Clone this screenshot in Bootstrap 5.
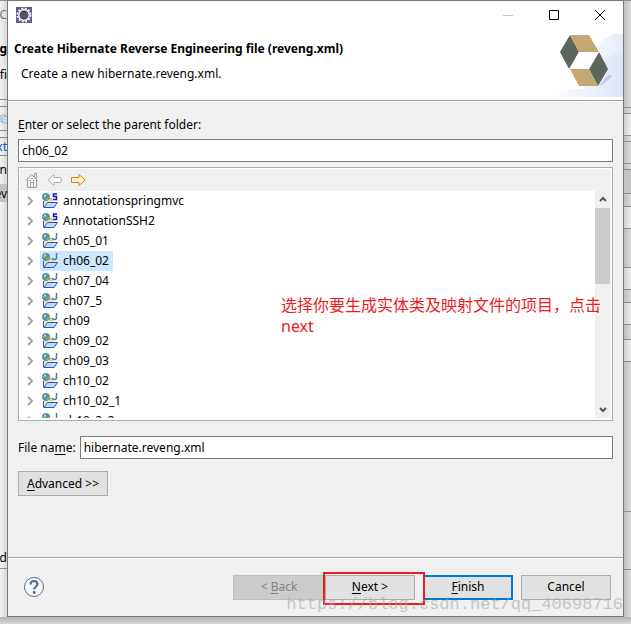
<!DOCTYPE html>
<html lang="en">
<head>
<meta charset="utf-8">
<meta name="viewport" content="width=device-width, initial-scale=1">
<title>Create Hibernate Reverse Engineering file</title>
<link href="https://cdn.jsdelivr.net/npm/bootstrap@5.3.0/dist/css/bootstrap.min.css" rel="stylesheet">
<style>
  body { font: 12px/20px "Noto Sans", "Noto Sans CJK SC", sans-serif; color: #000; background: #d6d6d6; }
  .desk { display: grid; grid-template-columns: 7px minmax(0, 1fr) 7px; height: 100vh; padding-bottom: 7px; background: linear-gradient(#d6d6d6 calc(100% - 8px), #b4b4b4 calc(100% - 7px), #d8d8d8); }
  .strip > div { flex: none; display: flex; align-items: center; justify-content: flex-end; overflow: hidden; white-space: nowrap; border-top: 1px solid #8c8c8c; }
  .strip-l { background: linear-gradient(90deg, #f2f2f2, #d9d9d9); }
  .strip-r { background: linear-gradient(90deg, #bdbdbd, #dcdcdc); }
  .strip > .plain { border-top-color: transparent; }
  .strip > .pale { background: linear-gradient(90deg, #cfcfcf, #efefef); }
  .strip > .shade { background: #c4c4c4; }
  .s-6 { height: 6px; } .s-7 { height: 7px; } .s-13 { height: 13px; } .s-15 { height: 15px; }
  .s-18 { height: 18px; } .s-22 { height: 22px; } .s-24 { height: 24px; } .s-29 { height: 29px; } .s-39 { height: 39px; }
  .s-58 { height: 58px; } .s-107 { height: 107px; } .s-150 { height: 150px; } .s-366 { height: 366px; }
  .dialog-win { border: 1px solid #787878; background: #f0f0f0; min-height: 0; }
  .head { background: #fff; border-bottom: 1px solid #a0a0a0; height: 100px; }
  .titlebar { height: 28px; padding: 0 0 0 8px; }
  .win-btn { width: 46px; height: 28px; padding: 0; border: 0; background: none; line-height: 0; }
  .head h1 { font-size: 12px; line-height: 20px; font-weight: 700; margin: 0; padding: 10px 0 0 6px; white-space: nowrap; }
  .head p { margin: 0; padding: 5px 0 0 13px; }
  .banner { right: 0; bottom: 0; }
  .content { padding: 13px 10px 61px; border-top: 1px solid #fff; border-bottom: 1px solid #a0a0a0; min-height: 0; }
  .field { height: 23px; border: 1px solid #7a7a7a; background: #fff; padding: 0 3px; line-height: 20px; color: #000; outline: 0; min-width: 0; }
  .panel { border: 1px solid #abadb3; margin: 5px 0 15px; padding: 1px 1px 2px; min-height: 0; background: #fff; }
  .toolrow { height: 22px; flex: none; background: #f0f0f0; padding-left: 4px; gap: 7px; }
  .icon-btn { border: 0; background: none; padding: 0; line-height: 0; width: 16px; height: 18px; }
  .tree li { height: 20px; display: flex; align-items: center; }
  .twist { border: 0; background: none; padding: 0; width: 20px; height: 20px; line-height: 0; }
  .node { display: flex; align-items: center; height: 20px; gap: 5px; padding: 0 4px 0 2px; color: #000; text-decoration: none; white-space: nowrap; }
  .node.picked { background: #cce8ff; }
  .sbar { width: 16px; background: #f0f0f0; flex: none; }
  .sbar button { border: 0; background: none; height: 17px; padding: 0; line-height: 0; }
  .thumb { height: 76px; background: #cdcdcd; width: 15px; }
  .note { left: 262px; top: 127px; width: 330px; font-size: 16px; line-height: 21px; color: #ed1c24; margin: 0; }
  .push { height: 25px; border: 1px solid #adadad; background: #e1e1e1; padding: 0; width: 90px; line-height: 20px; color: #000; }
  .push:disabled { background: #ccc; border-color: #bfbfbf; color: #838383; width: 92px; }
  .push.main { border: 2px solid #0078d7; }
  .foot { border-top: 1px solid #fff; height: 58px; padding: 0 12px 1px 15px; flex: none; }
  .ring { left: -2px; top: -3px; width: 102px; height: 33px; border: 2px solid #ed1c24; pointer-events: none; }
  .stamp { right: 0; bottom: 0; font: 17px/22px "Liberation Mono", monospace; color: #a4a699; opacity: .55; pointer-events: none; }
  u { text-underline-offset: 2px; }
</style>
<script src="https://cdn.jsdelivr.net/npm/bootstrap@5.3.0/dist/js/bootstrap.bundle.min.js"></script>
</head>
<body>
<svg class="d-none" xmlns="http://www.w3.org/2000/svg">
  <symbol id="folder" viewBox="0 0 16 16">
    <path d="M2 8h5V6h3l1 1v3l-7 0-2 4z" fill="#f8dfa2"/><path d="M7.500 7V5.500h2.500v2" fill="none" stroke="#d7aa58"/>
    <path d="M1.500 8v6.500" stroke="#3353b5"/>
    <path d="M2 14.500 5.500 9.500h10L12 14.500z" fill="#b9dcfb" stroke="#3353b5"/>
    <circle cx="4" cy="4" r="3.700" fill="#4a91b5" stroke="#477a9c" stroke-width=".5"/>
    <path d="M1 3.500 3.500 1 5 3 2.500 5.500zM4.500 5.500l2.500-2-.5 3-2 .5z" fill="#8fbe6a"/><path d="M2 3 3.500 1.800" stroke="#e6f5ff"/>
  </symbol>
  <symbol id="proj-j" viewBox="0 0 16 16"><use href="#folder"/><path d="M14.500 0v4.500q0 2-2 2T11 5" fill="none" stroke="#4a7da8" stroke-width="1.500"/></symbol>
  <symbol id="proj-s" viewBox="0 0 16 16"><use href="#folder"/><path d="M15 1h-3.500v2.500H14.500V6.500H11" fill="none" stroke="#1414c8" stroke-width="1.500"/></symbol>
  <symbol id="chev" viewBox="0 0 8 10"><path d="m2 1 4 4-4 4" fill="none" stroke="#a6a6a6" stroke-width="2"/></symbol>
</svg>
<div class="desk">
  <div class="strip strip-l d-flex flex-column overflow-hidden" aria-hidden="true">
    <div class="s-29 text-secondary">C</div>
    <div class="plain s-39 fw-bold">g</div>
    <div class="plain s-13">fi</div><div class="plain s-18"></div>
    <div class="s-7"></div>
    <div class="s-24"><svg width="12" height="14" viewBox="0 0 12 14" fill="#e7f1fb" stroke="#5f91bd"><path d="M1.500.500h8v11h-8z"/><path d="M4.500 3.500h8v10h-8zM6 8.500h6"/></svg></div>
    <div class="s-7"></div>
    <div class="s-18 text-primary-emphasis">xt</div>
    <div class="s-29">n</div>
    <div class="plain s-18 shade">ev</div>
    <div class="s-366 plain align-items-end">d</div>
    <div class="flex-grow-1"></div>
  </div>

  <main class="dialog-win d-flex flex-column position-relative">
    <header class="head position-relative flex-shrink-0">
      <svg class="banner position-absolute" width="74" height="66" viewBox="-1 1 74 66" aria-hidden="true">
        <defs><linearGradient id="g1"><stop stop-color="#fff"/><stop offset="1" stop-color="#dde4f7"/></linearGradient>
        <linearGradient id="g2"><stop stop-color="#fff"/><stop offset="1" stop-color="#e4eaf8"/></linearGradient></defs>
        <path d="M32 62Q36 4 74-2v64z" fill="url(#g2)"/><path d="M0 56h34Q48 22 74 19v45H0z" fill="url(#g1)"/>
        <path d="M49 53 58 42 62 42Q59 49 49 53" fill="#c6cbe0"/>
        <path d="m20 2-10 17 9 17 10-17zM49 19l-10 17 9 17 10-17z" fill="#5b665d"/>
        <path d="M20 2h19l10 17H29zM20 36h19l9 17H29z" fill="#c5a772"/><path d="M29 19h20l-10 17H20z" fill="#fff"/>
      </svg>
      <div class="titlebar d-flex justify-content-between align-items-center">
        <svg width="16" height="16" viewBox="0 0 16 16" aria-hidden="true"><path d="M0 0h16v16H0z" fill="#67558f"/><circle cx="8" cy="8" r="6.500" fill="none" stroke="#eee" stroke-width="2" stroke-dasharray="2 1.400"/><circle cx="8" cy="8" r="5.200" fill="#383750" stroke="#f5f5f5" stroke-width="1.500"/><path d="M4 6h8M3.500 8h9M4 10h8" stroke="#77758c"/></svg>
        <div class="d-flex">
          <button class="win-btn" type="button" aria-label="Minimize"><svg width="10" height="10" stroke="#c6c6c6"><path d="M0 5.500h10"/></svg></button>
          <button class="win-btn" type="button" aria-label="Maximize"><svg width="10" height="10" fill="none" stroke="#000"><path d="M.500.500h9v9h-9z"/></svg></button>
          <button class="win-btn" type="button" aria-label="Close"><svg width="10" height="10" stroke="#000"><path d="m0 0 10 10M10 0 0 10"/></svg></button>
        </div>
      </div>
      <h1>Create Hibernate Reverse Engineering file (reveng.xml)</h1>
      <p>Create a new hibernate.reveng.xml.</p>
    </header>

    <section class="content d-flex flex-column flex-grow-1">
      <label for="parent"><u>E</u>nter or select the parent folder:</label>
      <input id="parent" class="field w-100 mt-1 flex-shrink-0" type="text" value="ch06_02">
      <div class="panel d-flex flex-column flex-grow-1 position-relative">
        <div class="toolrow d-flex align-items-center">
          <button class="icon-btn" type="button" aria-label="Home"><svg width="14" height="16" viewBox="0 0 14 16" fill="none" stroke="#9b9b9b"><path d="M1 8.500 6.500 2.500l6 6M2.500 8v7.500h9V8M9.500 5V1.500h2v5M5.500 15V10.500h3V15M4.500 8.500h1.500M8 8.500h1.500M6 6.500h2"/></svg></button>
          <button class="icon-btn" type="button" aria-label="Back to previous folder"><svg width="16" height="14" viewBox="0 0 16 14" fill="#f8f8f8" stroke="#aaa"><path d="M1 7 7 1.500v3h5.500q2 0 2 2.500t-2 2.500H7v3z"/></svg></button>
          <button class="icon-btn" type="button" aria-label="Go into folder"><svg width="16" height="14" viewBox="0 0 16 14" fill="#fff0bd" stroke="#c58a20"><path d="M15 7 9 1.500v3H1.500v5H9v3z"/></svg></button>
        </div>
        <div class="d-flex flex-grow-1 overflow-hidden">
          <ul class="tree list-unstyled m-0 flex-grow-1 overflow-hidden" id="tree"></ul>
          <div class="sbar d-flex flex-column">
            <button type="button" aria-label="Scroll up"><svg width="8" height="7" fill="none" stroke="#555" stroke-width="2"><path d="m1 5 3-3 3 3"/></svg></button>
            <div class="thumb"></div>
            <button class="mt-auto" type="button" aria-label="Scroll down"><svg width="8" height="7" fill="none" stroke="#555" stroke-width="2"><path d="m1 2 3 3 3-3"/></svg></button>
          </div>
        </div>
        <p class="note position-absolute" lang="zh-CN">选择你要生成实体类及映射文件的项目，点击next</p>
      </div>
      <div class="d-flex align-items-center flex-shrink-0">
        <label for="fname" class="me-1">File na<u>m</u>e:</label>
        <input id="fname" class="field flex-grow-1" type="text" value="hibernate.reveng.xml">
      </div>
      <div class="mt-2 pt-1 flex-shrink-0 d-flex"><button class="push" type="button"><u>A</u>dvanced &gt;&gt;</button></div>
    </section>

    <footer class="foot d-flex align-items-center">
      <button class="icon-btn me-auto w-auto h-auto" type="button" aria-label="Help"><svg width="22" height="22" viewBox="0 0 22 22" fill="none"><circle cx="11" cy="11" r="9.500" fill="#f6f8fb" stroke="#5b6c8e"/><path d="M7.500 8.500Q7.700 5 11 5t3.400 3q0 1.700-1.700 2.800T11.200 13.500" stroke="#596b90" stroke-width="2.200"/><circle cx="11.200" cy="16.500" r="1.400" fill="#596b90"/></svg></button>
      <button class="push" type="button" disabled>&lt; <u>B</u>ack</button>
      <div class="position-relative"><button class="push" type="button"><u>N</u>ext &gt;</button><span class="ring position-absolute"></span></div>
      <button class="push main ms-2" type="button"><u>F</u>inish</button>
      <button class="push ms-2" type="button">Cancel</button>
    </footer>
    <span class="stamp position-absolute">https://blog.csdn.net/qq_40698716</span>
  </main>

  <div class="strip strip-r d-flex flex-column overflow-hidden" aria-hidden="true">
    <div class="s-107"></div><div class="s-6"></div><div class="s-22 pale"></div><div class="s-6"></div><div class="s-22"></div><div class="s-6"></div>
    <div class="s-24 shade"></div><div class="s-13"></div><div class="s-22 pale"></div><div class="s-39"></div><div class="s-22 pale"></div><div class="s-13"></div>
    <div class="s-22 pale"></div><div class="s-15"></div><div class="s-22 pale"></div><div class="s-150"></div><div class="s-58"></div><div class="flex-grow-1"></div>
  </div>
</div>
<script>
  const projects = [["annotationspringmvc", "s"], ["AnnotationSSH2", "s"], ["ch05_01"], ["ch06_02"], ["ch07_04"], ["ch07_5"],
    ["ch09"], ["ch09_02"], ["ch09_03"], ["ch10_02"], ["ch10_02_1"], ["ch10_2_2"]];
  document.getElementById("tree").innerHTML = projects.map(([name, kind = "j"]) => `<li>
    <button class="twist" type="button" aria-label="Expand ${name}"><svg width="8" height="10"><use href="#chev"/></svg></button>
    <a href="#" class="node${name === "ch06_02" ? " picked" : ""}"><svg width="16" height="16"><use href="#proj-${kind}"/></svg>${name}</a></li>`).join("");
</script>
</body>
</html>
